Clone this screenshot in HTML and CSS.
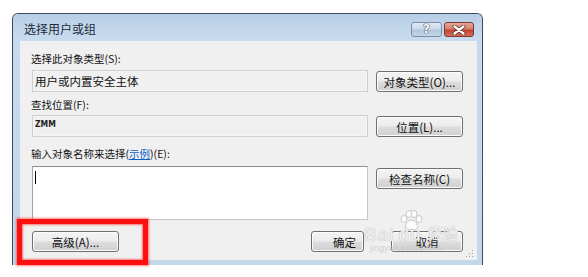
FILE: index.html
```html
<!DOCTYPE html>
<html>
<head>
<meta charset="utf-8">
<link rel="stylesheet" href="styles.css">
</head>
<body>
<div class="page">
  <div class="window">
    <div class="titlebar">
      <span class="title">选择用户或组</span>
      <div class="ctrls">
        <span class="cbtn help">?</span>
        <span class="cbtn close">
          <svg width="14" height="10" viewBox="0 0 14 10"><path d="M2.5 1.5 L11.5 8.5 M11.5 1.5 L2.5 8.5" stroke="#5a2a26" stroke-width="4" stroke-linecap="round"/><path d="M2.5 1.5 L11.5 8.5 M11.5 1.5 L2.5 8.5" stroke="#ffffff" stroke-width="2.4" stroke-linecap="round"/></svg>
        </span>
      </div>
    </div>
    <div class="client">
      <div class="form">
        <div class="label l1">选择此对象类型(S):</div>
        <div class="field ro big">用户或内置安全主体</div>
        <div class="btn b-end">对象类型(O)...</div>

        <div class="label l2">查找位置(F):</div>
        <div class="field ro small">ZMM</div>
        <div class="btn b-end">位置(L)...</div>

        <div class="label l3">输入对象名称来选择(<span class="link">示例</span>)(E):</div>
        <div class="area"><span class="caret"></span></div>
        <div class="btn b-start">检查名称(C)</div>

        <div class="bottom">
          <div class="btn w-adv">高级(A)...</div>
          <div class="spacer"></div>
          <div class="btn w-ok">确定</div>
          <div class="btn w-cancel">取消</div>
        </div>
      </div>
      <svg class="grip" width="9" height="9" viewBox="0 0 9 9">
        <rect x="7" y="1" width="1" height="1" fill="#a0a0a0"/>
        <rect x="4" y="4" width="1" height="1" fill="#a0a0a0"/>
        <rect x="7" y="4" width="1" height="1" fill="#a0a0a0"/>
        <rect x="1" y="7" width="1" height="1" fill="#a0a0a0"/>
        <rect x="4" y="7" width="1" height="1" fill="#a0a0a0"/>
        <rect x="7" y="7" width="1" height="1" fill="#a0a0a0"/>
      </svg>
    </div>
  </div>
  <div class="watermark">
    <svg class="paw" width="26" height="22" viewBox="0 0 26 22">
      <g fill="rgba(255,255,255,0.85)" stroke="#c8c8c8" stroke-width="1">
        <ellipse cx="6" cy="9" rx="3" ry="3.5"/>
        <ellipse cx="11" cy="4" rx="3" ry="3.5"/>
        <ellipse cx="16" cy="4" rx="3" ry="3.5"/>
        <ellipse cx="21" cy="9" rx="3" ry="3.5"/>
        <path d="M13.5 10 C8 10 6 18 9 19.5 C11 20.5 12 19 13.5 19 C15 19 16 20.5 18 19.5 C21 18 19 10 13.5 10 Z"/>
      </g>
    </svg>
    <span class="wm-text">Bai<span class="gap"></span>du</span><span class="wm-cn">经验</span>
    <span class="wm-url">jingyan.baidu.com</span>
  </div>
  <div class="highlight"></div>
</div>
</body>
</html>
```

FILE: styles.css
```css
* { box-sizing: border-box; }
html, body { margin: 0; padding: 0; background: #ffffff; }
.page {
  position: relative;
  width: 588px;
  height: 277px;
  overflow: hidden;
  font-family: "Noto Sans CJK SC", "Liberation Sans", sans-serif;
  color: #000;
}
.window {
  margin: 13px 0 0 12px;
  width: 471px;
  height: 252px;
  border: 1px solid #3c4a5a;
  border-bottom: none;
  border-radius: 6px 6px 0 0;
  background: linear-gradient(180deg, #c0d4ea 0px, #c6d9ee 28px, #c4d8ec 100%);
  display: flex;
  flex-direction: column;
  padding-bottom: 5px;
}
.titlebar {
  height: 27px;
  display: flex;
  justify-content: space-between;
  align-items: flex-start;
  padding: 0 8px 0 11px;
  background: linear-gradient(180deg, #b6cde6 0%, #c2d6eb 45%, #c8dbef 100%);
  border-radius: 5px 5px 0 0;
}
.title {
  margin-top: 5px;
  font-size: 12px;
  line-height: 20px;
  color: #1e2a36;
}
.ctrls {
  margin-top: 8px;
  display: flex;
  gap: 2px;
}
.cbtn {
  height: 15px;
  border-radius: 3px;
  display: flex;
  align-items: center;
  justify-content: center;
}
.help {
  width: 31px;
  border: 1px solid #7b8ea6;
  background: linear-gradient(180deg, #e2ebf5 0%, #cbd9ea 45%, #b3c7de 55%, #c4d5e8 100%);
  font-family: "DejaVu Sans", sans-serif;
  font-weight: bold;
  font-size: 12px;
  line-height: 13px;
  color: #ffffff;
  text-shadow: 0 0 1px #3d4d61, 0 0 1px #3d4d61, 0 0 1px #3d4d61;
}
.close {
  width: 30px;
  border: 1px solid #7a3a32;
  background: linear-gradient(180deg, #e9a99a 0%, #d9806c 45%, #c3422f 55%, #d4705a 100%);
}
.client {
  position: relative;
  flex: 1;
  margin: 0 5px 0 7px;
  background: #f0f0f0;
  padding: 11px 14px 0 12px;
}
.form {
  display: grid;
  grid-template-columns: 336px 87px;
  column-gap: 8px;
}
.label {
  grid-column: 1 / -1;
  font-size: 10.5px;
  line-height: 14px;
  margin-left: -1px;
  color: #111;
}
.l1 { margin-bottom: 4px; }
.l2 { margin-top: 6px; margin-bottom: 3px; }
.l3 { margin-top: 10px; margin-bottom: 5px; }
.link { color: #0a5ecb; text-decoration: underline; }
.field {
  height: 22px;
  display: flex;
  padding-left: 2px;
}
.ro {
  background: #f0f0f0;
  border: 1px solid #cfcfcf;
  box-shadow: inset 0 0 0 1px #f5f5f5;
}
.big {
  align-items: center;
  font-size: 11.5px;
  color: #111;
}
.small {
  align-items: flex-start;
  padding-top: 3px;
  font-family: "DejaVu Sans Condensed", "Liberation Sans", sans-serif;
  font-weight: bold;
  font-size: 8.5px;
  line-height: 10px;
  color: #222;
}
.area {
  height: 54px;
  background: #ffffff;
  border: 1px solid #c4c8cc;
  border-top-color: #8a8d91;
  border-left-color: #a0a4a8;
  padding: 4px 0 0 2px;
}
.caret {
  display: block;
  width: 1px;
  height: 13px;
  background: #000;
}
.btn {
  height: 21px;
  border: 1px solid #707070;
  border-radius: 3px;
  background: linear-gradient(180deg, #f4f4f4 0%, #ececec 48%, #dddddd 52%, #cfcfcf 100%);
  box-shadow: inset 0 0 0 1px #fbfbfb;
  display: flex;
  align-items: center;
  justify-content: center;
  font-size: 11.5px;
  line-height: 14px;
  color: #111;
  white-space: nowrap;
}
.b-end { align-self: end; }
.b-start { align-self: start; margin-top: 2px; }
.bottom {
  grid-column: 1 / -1;
  margin-top: 11px;
  display: flex;
}
.spacer { flex: 1; }
.w-adv { width: 87px; }
.w-ok { width: 53px; padding-left: 14px; }
.w-cancel { width: 72px; margin-left: 27px; }
.grip {
  position: absolute;
  right: 3px;
  bottom: 2px;
}
.watermark {
  position: absolute;
  left: 364px;
  top: 210px;
  width: 100px;
  height: 45px;
}
.paw {
  position: absolute;
  left: 34px;
  top: 0;
}
.wm-text {
  position: absolute;
  left: 0;
  top: 14px;
  font-family: "Liberation Sans", sans-serif;
  font-size: 19px;
  line-height: 22px;
  color: rgba(255, 255, 255, 0.8);
  text-shadow: 0 0 1px #b8b8b8, 0 0 1px #b8b8b8;
  letter-spacing: 1px;
}
.gap { display: inline-block; width: 4px; }
.wm-cn {
  position: absolute;
  left: 64px;
  top: 14px;
  font-size: 15px;
  line-height: 18px;
  color: rgba(255, 255, 255, 0.8);
  text-shadow: 0 0 1px #b8b8b8, 0 0 1px #b8b8b8;
}
.wm-url {
  position: absolute;
  left: 6px;
  top: 33px;
  font-family: "Liberation Sans", sans-serif;
  font-size: 9px;
  line-height: 10px;
  color: rgba(200, 200, 200, 0.8);
}
.highlight {
  position: absolute;
  left: 17px;
  top: 219px;
  width: 131px;
  height: 46px;
  border: 5px solid #ff1010;
  box-shadow: 0 0 2px 1px rgba(255, 0, 0, 0.5), inset 0 0 2px 1px rgba(255, 0, 0, 0.5);
}
```
